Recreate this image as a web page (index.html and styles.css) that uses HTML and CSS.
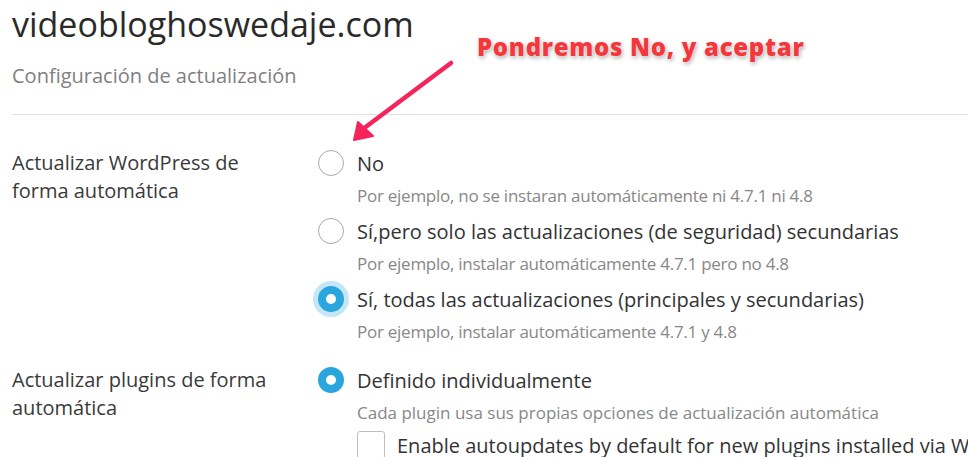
FILE: index.html
```html
<!DOCTYPE html>
<html lang="es">
<head>
<meta charset="utf-8">
<link rel="stylesheet" href="styles.css">
</head>
<body>
<div class="page">
  <h1 class="title">videobloghoswedaje.com</h1>
  <p class="subtitle">Configuración de actualización</p>
  <div class="divider"></div>

  <div class="row">
    <div class="label">Actualizar WordPress de<br>forma automática</div>
    <div class="options">
      <div class="opt"><span class="radio"></span><span class="opt-text">No</span></div>
      <p class="desc narrow">Por ejemplo, no se instaran automáticamente ni 4.7.1 ni 4.8</p>
      <div class="opt"><span class="radio"></span><span class="opt-text">Sí,pero solo las actualizaciones (de seguridad) secundarias</span></div>
      <p class="desc narrow">Por ejemplo, instalar automáticamente 4.7.1 pero no 4.8</p>
      <div class="opt"><span class="radio checked focus"></span><span class="opt-text">Sí, todas las actualizaciones (principales y secundarias)</span></div>
      <p class="desc narrow">Por ejemplo, instalar automáticamente 4.7.1 y 4.8</p>
    </div>
  </div>

  <div class="row row-2">
    <div class="label">Actualizar plugins de forma<br>automática</div>
    <div class="options">
      <div class="opt"><span class="radio checked"></span><span class="opt-text">Definido individualmente</span></div>
      <p class="desc">Cada plugin usa sus propias opciones de actualización automática</p>
      <div class="check-row"><span class="checkbox"></span><span class="opt-text">Enable autoupdates by default for new plugins installed via WP</span></div>
    </div>
  </div>

  <div class="note">Pondremos No, y aceptar</div>
  <svg class="arrow" width="120" height="100" viewBox="0 0 120 100">
    <line x1="108" y1="13" x2="20" y2="79" stroke="#f5245a" stroke-width="4.5" stroke-linecap="round"/>
    <polygon points="11,90 15,72 30,86" fill="#f5245a" stroke="#f5245a" stroke-width="2" stroke-linejoin="round"/>
  </svg>
</div>
</body>
</html>
```
FILE: styles.css
```css
html, body {
  margin: 0;
  padding: 0;
  background: #fff;
  overflow: hidden;
}
body {
  font-family: "Open Sans", "Liberation Sans", sans-serif;
  color: #333;
}
.page {
  position: relative;
  padding: 0 0 0 12px;
  width: 956px;
  height: 457px;
  overflow: hidden;
}
.title {
  margin: 0;
  padding-top: 2px;
  font-size: 34px;
  font-weight: 400;
  line-height: 44px;
  color: #2a2a2a;
}
.subtitle {
  margin: 16px 0 0;
  font-size: 20px;
  line-height: 28px;
  color: #808080;
}
.divider {
  margin-top: 24px;
  height: 1px;
  background: #e2e1e6;
}
.row {
  display: flex;
  margin-top: 34px;
}
.row-2 {
  margin-top: 13px;
}
.label {
  width: 306px;
  flex: none;
  font-size: 20px;
  line-height: 28px;
  color: #3a3a3a;
}
.options {
  flex: 1;
  min-width: 0;
}
.opt {
  display: flex;
  align-items: center;
  height: 28px;
}
.opt-text {
  font-size: 20px;
  color: #333;
  white-space: nowrap;
  margin-left: 13px;
}
.radio {
  flex: none;
  width: 26px;
  height: 26px;
  box-sizing: border-box;
  border-radius: 50%;
  border: 1.5px solid #a9a9a9;
  background: #fff;
}
.radio.checked {
  border: 8px solid #2aa6df;
  background: #fff;
}
.radio.focus {
  box-shadow: 0 0 0 5px #c5e6f7;
}
.desc {
  margin: 8px 0 10px 39px;
  font-size: 17px;
  line-height: 22px;
  color: #888;
  white-space: nowrap;
}
.desc.narrow {
  letter-spacing: -0.26px;
}
.check-row {
  display: flex;
  align-items: center;
  margin-left: 39px;
  margin-top: -3px;
}
.check-row .opt-text {
  margin-left: 12px;
}
.checkbox {
  flex: none;
  width: 28px;
  height: 28px;
  box-sizing: border-box;
  border: 1.5px solid #bdbdbd;
  border-radius: 3px;
}
.note {
  position: absolute;
  left: 477px;
  top: 30px;
  font-family: "Open Sans", "Inter", sans-serif;
  font-weight: 800;
  font-size: 24px;
  letter-spacing: 0.7px;
  color: #f5373c;
  white-space: nowrap;
  text-shadow: 0 0 2px #fff, 1px 2px 4px rgba(0,0,0,0.35);
}
.arrow {
  position: absolute;
  left: 343px;
  top: 50px;
}
```
